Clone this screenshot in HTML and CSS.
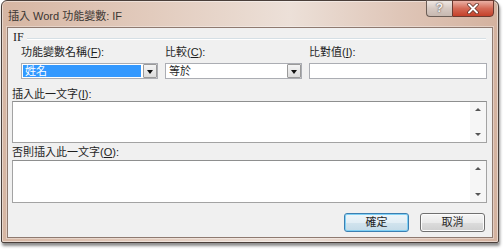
FILE: index.html
```html
<!DOCTYPE html>
<html lang="zh-TW">

<head>
  <meta charset="UTF-8" />
  <title>插入 Word 功能變數: IF</title>
  <link rel="stylesheet" href="styles.css">
</head>

<body>

  <div class="ventana">
    <div class="barra-titulo">
      <span class="titulo">插入 Word 功能變數: IF</span>
      <div class="botones-titulo">
        <span class="btn-ayuda">?</span>
        <span class="btn-cerrar">
          <svg width="14" height="11" viewBox="0 0 14 11">
            <path d="M3 1.5 L11 9.5 M11 1.5 L3 9.5" stroke="#5a2a20" stroke-width="3.4" stroke-linecap="round" />
            <path d="M3 1.5 L11 9.5 M11 1.5 L3 9.5" stroke="#ffffff" stroke-width="2" stroke-linecap="round" />
          </svg>
        </span>
      </div>
    </div>

    <div class="cliente">
      <div class="grupo">
        <span class="grupo-nombre">IF</span>
        <span class="grupo-linea"></span>
      </div>

      <div class="campos">
        <div class="campo">
          <label>功能變數名稱(<u>F</u>):</label>
          <div class="combo">
            <span class="combo-valor seleccionado">姓名</span>
            <span class="combo-flecha"></span>
          </div>
        </div>
        <div class="campo">
          <label>比較(<u>C</u>):</label>
          <div class="combo">
            <span class="combo-valor">等於</span>
            <span class="combo-flecha"></span>
          </div>
        </div>
        <div class="campo">
          <label>比對值(<u>I</u>):</label>
          <div class="entrada"></div>
        </div>
      </div>

      <label class="etiqueta">插入此一文字(<u>I</u>):</label>
      <div class="area">
        <div class="barra-desplazamiento">
          <span class="flecha-arriba"></span>
          <span class="flecha-abajo"></span>
        </div>
      </div>

      <label class="etiqueta etiqueta-2">否則插入此一文字(<u>O</u>):</label>
      <div class="area area-2">
        <div class="barra-desplazamiento">
          <span class="flecha-arriba"></span>
          <span class="flecha-abajo"></span>
        </div>
      </div>

      <div class="acciones">
        <button class="boton predeterminado">確定</button>
        <button class="boton">取消</button>
      </div>
    </div>
  </div>

</body>

</html>
```

FILE: styles.css
```css
body {
  font-family: "Liberation Sans", "Noto Sans CJK TC", sans-serif;
  font-size: 11px;
  color: #1e1e1e;
  margin: 0;
  padding: 0;
  width: 504px;
  height: 249px;
  overflow: hidden;
  background: #ffffff;
}

.ventana {
  margin-left: 1px;
  width: 498px;
  height: 243px;
  box-sizing: border-box;
  display: flex;
  flex-direction: column;
  border: 1px solid #4a3f3a;
  border-radius: 6px 6px 2px 2px;
  background: linear-gradient(90deg, #d6b6a3 0%, #e2cbbd 30%, #ece0d8 58%, #dfc6b8 80%, #d4b29f 100%);
  box-shadow: 1px 3px 3px rgba(0, 0, 0, 0.45), inset 0 0 0 1px rgba(255, 255, 255, 0.45);
  padding: 0 5px 4px 5px;
}

.barra-titulo {
  height: 26px;
  display: flex;
  justify-content: space-between;
  align-items: flex-start;
}

.titulo {
  color: #3a3532;
  line-height: 14px;
  margin-top: 8px;
  margin-left: 1px;
}

.botones-titulo {
  display: flex;
  margin-top: -1px;
  margin-right: -1px;
}

.btn-ayuda {
  width: 26px;
  height: 17px;
  box-sizing: border-box;
  border: 1px solid #6b5d56;
  border-right: none;
  border-radius: 0 0 0 4px;
  background: linear-gradient(#efe7e2, #d6c9c2 50%, #c7b8b0);
  color: #f4f0ee;
  font-weight: bold;
  font-size: 12px;
  line-height: 15px;
  text-align: center;
  text-shadow: 0 0 2px #6a5e58, 0 0 1px #6a5e58;
}

.btn-cerrar {
  width: 42px;
  height: 17px;
  box-sizing: border-box;
  border: 1px solid #6b3a30;
  border-radius: 0 0 4px 0;
  background: linear-gradient(#eab1a4, #d46a56 50%, #c4402a);
  display: flex;
  align-items: center;
  justify-content: center;
}

.cliente {
  flex: 1;
  background: #f0f0f0;
  border: 1px solid #8f7a70;
  box-shadow: 0 0 0 1px rgba(255, 255, 255, 0.35);
  padding: 0 5px 0 4px;
  display: flex;
  flex-direction: column;
}

.grupo {
  display: flex;
  align-items: center;
  height: 12px;
  margin-top: 3px;
}

.grupo-nombre {
  font-family: "Liberation Serif", "Noto Sans CJK TC", serif;
  font-size: 12px;
  line-height: 12px;
  margin-left: 1px;
  margin-right: 3px;
}

.grupo-linea {
  flex: 1;
  border-top: 1px solid #d5dfe5;
  border-bottom: 1px solid #ffffff;
  margin-right: 1px;
  margin-top: 3px;
}

.campos {
  display: grid;
  grid-template-columns: 137px 137px 1fr;
  column-gap: 7px;
  margin-top: 2px;
  margin-left: 9px;
}

.campo label {
  display: block;
  line-height: 14px;
  height: 14px;
  margin-bottom: 4px;
}

.combo {
  height: 16px;
  box-sizing: border-box;
  border: 1px solid #abadb3;
  background: #ffffff;
  display: flex;
  padding: 1px;
}

.combo-valor {
  flex: 1;
  line-height: 12px;
  padding-left: 2px;
}

.combo-valor.seleccionado {
  background: #3399ff;
  color: #ffffff;
  margin-right: 2px;
}

.combo-flecha {
  width: 14px;
  box-sizing: border-box;
  border: 1px solid #9a9a9a;
  border-radius: 1px;
  background: linear-gradient(#f4f4f4, #dcdcdc);
  margin: -1px -1px -1px 0;
  position: relative;
}

.combo-flecha::after {
  content: "";
  position: absolute;
  left: 3px;
  top: 5px;
  border-left: 3px solid transparent;
  border-right: 3px solid transparent;
  border-top: 4px solid #111111;
}

.entrada {
  height: 16px;
  box-sizing: border-box;
  border: 1px solid #abadb3;
  background: #ffffff;
}

.etiqueta {
  display: block;
  line-height: 13px;
  height: 13px;
  margin-top: 9px;
}

.etiqueta-2 {
  margin-top: 3px;
  margin-bottom: 1px;
}

.area {
  height: 42px;
  box-sizing: border-box;
  border: 1px solid #a3a3a3;
  border-top-color: #8e8f8f;
  background: #ffffff;
  display: flex;
  justify-content: flex-end;
}

.area-2 {
  height: 43px;
}

.barra-desplazamiento {
  width: 16px;
  background: #f6f6f6;
  display: flex;
  flex-direction: column;
  justify-content: space-between;
  align-items: center;
  padding: 6px 0;
  box-sizing: border-box;
}

.flecha-arriba {
  border-left: 3px solid transparent;
  border-right: 3px solid transparent;
  border-bottom: 3px solid #555555;
}

.flecha-abajo {
  border-left: 3px solid transparent;
  border-right: 3px solid transparent;
  border-top: 3px solid #555555;
}

.acciones {
  display: flex;
  justify-content: flex-end;
  gap: 11px;
  margin-top: 10px;
  margin-right: 2px;
}

.boton {
  font-family: "Liberation Sans", "Noto Sans CJK TC", sans-serif;
  font-size: 11px;
  color: #1e1e1e;
  width: 65px;
  height: 19px;
  padding: 0;
  line-height: 15px;
  border: 1px solid #707070;
  border-radius: 3px;
  background: linear-gradient(#f6f6f6, #eaeaea 50%, #dcdcdc 51%, #cfcfcf);
  box-shadow: inset 0 0 0 1px #fcfcfc;
}

.boton.predeterminado {
  border-color: #3c7fb1;
  box-shadow: inset 0 0 0 1px #7fd0f5;
  background: linear-gradient(#eef6fa, #e2eef5 50%, #d2e4ee 51%, #c4dbe8);
}
```
